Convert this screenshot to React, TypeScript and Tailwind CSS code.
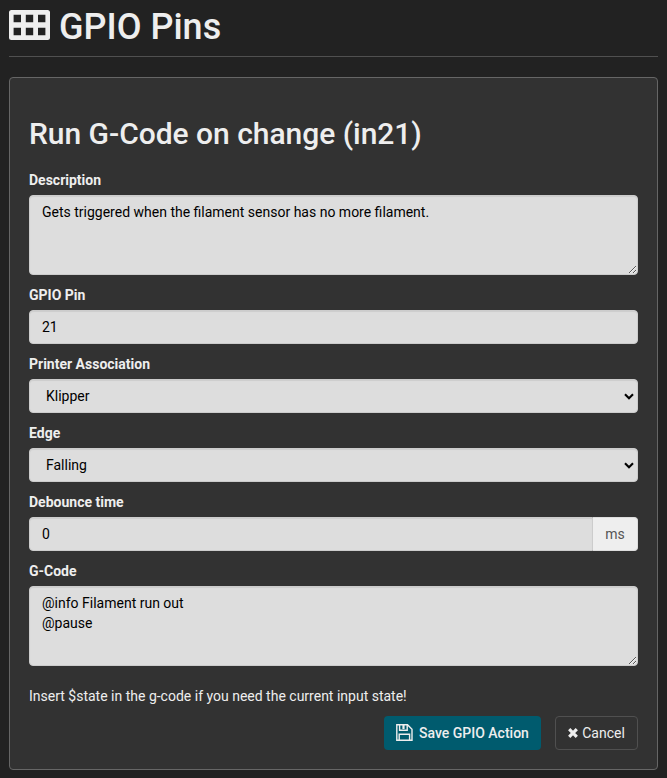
import clsx from 'clsx';
import type { ReactNode } from 'react';

const fieldStyles =
  'block w-full rounded border border-[#ccc] bg-[#ddd] text-sm leading-5 text-black shadow-[inset_0_1px_1px_rgba(0,0,0,0.075)] outline-none';

interface FieldProps {
  label: string;
  children: ReactNode;
}

function Field({ label, children }: FieldProps) {
  return (
    <label className="mb-2.5 block">
      <span className="mb-[5px] block text-sm leading-5 font-bold">{label}</span>
      {children}
    </label>
  );
}

function TextArea({ value }: { value: string }) {
  return (
    <textarea
      className={clsx(fieldStyles, 'h-20 resize-y px-3 py-1.5')}
      defaultValue={value}
      spellCheck={false}
    />
  );
}

function Select({ value }: { value: string }) {
  return (
    <div className="relative">
      <select className={clsx(fieldStyles, 'h-[34px] appearance-none px-4 py-1.5')} defaultValue={value}>
        <option>{value}</option>
      </select>
      <svg
        className="pointer-events-none absolute top-[14px] right-1 h-[7px] w-[10px]"
        viewBox="0 0 10 7"
        fill="none"
        stroke="black"
        strokeWidth="2.1"
      >
        <path d="M1 1.2 5 5.2 9 1.2" />
      </svg>
    </div>
  );
}

function GridIcon() {
  return (
    <svg className="h-[30px] w-[41px]" viewBox="0 0 41 30" fill="currentColor">
      <path
        fillRule="evenodd"
        d="M2.5 0H38.5Q41 0 41 2.5V27.5Q41 30 38.5 30H2.5Q0 30 0 27.5V2.5Q0 0 2.5 0ZM4.6 4.8V12.2H12V4.8ZM16.8 4.8V12.2H24.2V4.8ZM29 4.8V12.2H36.4V4.8ZM4.6 17.8V25.2H12V17.8ZM16.8 17.8V25.2H24.2V17.8ZM29 17.8V25.2H36.4V17.8Z"
      />
    </svg>
  );
}

function SaveIcon() {
  return (
    <svg className="-mt-0.5 h-[17px] w-[17px]" viewBox="0 0 17 17" fill="none" stroke="currentColor" strokeWidth="1.4">
      <path d="M.8.8H11.5L16 5.3V16.2H.8Z" />
      <path d="M3.6 1V6.2H11.2V1M3.2 16V10.2H13.6V16" />
      <path d="M6.4 1H8.6V5H6.4Z" fill="currentColor" stroke="none" />
    </svg>
  );
}

function CloseIcon() {
  return (
    <svg className="h-[10px] w-[10px]" viewBox="0 0 10 10" stroke="currentColor" strokeWidth="3.2">
      <path d="M1.2 1.2 8.8 8.8M8.8 1.2 1.2 8.8" />
    </svg>
  );
}

export default function App() {
  return (
    <div className="min-h-screen bg-[#222] px-[9px] font-['Roboto',sans-serif] text-[#eee]">
      <header className="flex h-[57px] items-start border-b border-[#505050] pt-[7px]">
        <div className="mt-[3px] mr-[9px]">
          <GridIcon />
        </div>
        <h1 className="text-[36px] leading-10 font-medium">GPIO Pins</h1>
      </header>

      <main className="mt-5 h-[693px] rounded border border-[#666] bg-[#323232] px-[19px] pt-[39px]">
        <h2 className="mb-5 text-[30px] leading-[33px] font-medium tracking-[-0.03px]">Run G-Code on change (in21)</h2>

        <Field label="Description">
          <TextArea value="Gets triggered when the filament sensor has no more filament." />
        </Field>
        <Field label="GPIO Pin">
          <input className={clsx(fieldStyles, 'h-[34px] px-3 py-1.5')} defaultValue="21" />
        </Field>
        <Field label="Printer Association">
          <Select value="Klipper" />
        </Field>
        <Field label="Edge">
          <Select value="Falling" />
        </Field>
        <Field label="Debounce time">
          <div className="flex">
            <input className={clsx(fieldStyles, 'h-[34px] min-w-0 flex-1 rounded-r-none px-3 py-1.5')} defaultValue="0" />
            <span className="flex w-[45px] items-center justify-center rounded-r border border-l-0 border-[#ddd] bg-[#eee] text-sm text-[#555]">
              ms
            </span>
          </div>
        </Field>
        <Field label="G-Code">
          <TextArea value={'@info Filament run out\n@pause'} />
        </Field>

        <p className="mt-5 mb-2.5 text-sm leading-5">Insert $state in the g-code if you need the current input state!</p>

        <div className="flex justify-end gap-[14px] text-sm">
          <button className="flex h-[34px] w-[157px] items-center rounded bg-[#005b6e] pl-3 font-medium">
            <SaveIcon />
            <span className="ml-1.5">Save GPIO Action</span>
          </button>
          <button className="flex h-[34px] w-[83px] items-center justify-center gap-1 rounded border border-[#505050]">
            <CloseIcon />
            Cancel
          </button>
        </div>
      </main>
    </div>
  );
}
